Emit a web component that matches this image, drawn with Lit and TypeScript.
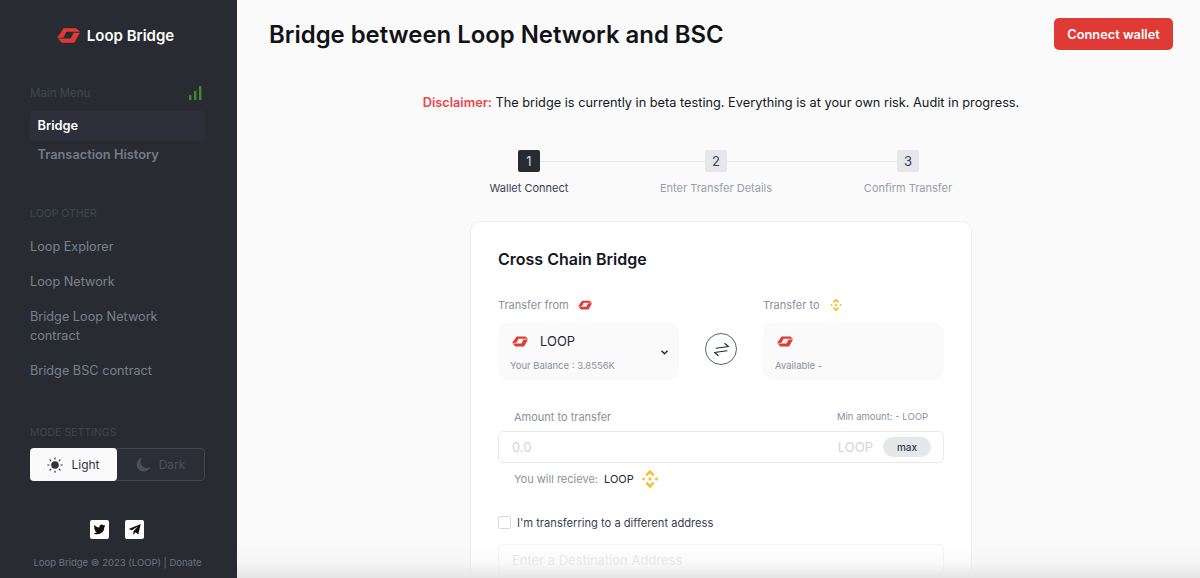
import { LitElement, html, css, svg } from 'lit';
import { customElement } from 'lit/decorators.js';

const loopIcon = (w: number, h: number) => html`<svg width=${w} height=${h} viewBox="0 0 24 15">
  <path fill="#e03a32" d="M0 10 7 0H20L24 3.500H9.800L6.800 9.500Z"/>
  <path fill="#e03a32" d="M24 4.500 18 15H5L1 10.500H14.300L17.300 4.500Z"/>
</svg>`;

const bnbIcon = (s: number) => html`<svg width=${s} height=${s} viewBox="0 0 24 24" fill="#f0b90b" opacity=".85">
  ${svg`<path d="M12 1 17.500 6.500 15.300 8.700 12 5.400 8.700 8.700 6.500 6.500Z"/>
  <path d="M12 23 6.500 17.500 8.700 15.300 12 18.600 15.300 15.300 17.500 17.500Z"/>
  <path d="M4.300 9.800 6.500 12 4.300 14.200 2.100 12Z"/>
  <path d="M19.700 9.800 21.900 12 19.700 14.200 17.500 12Z"/>
  <path d="M12 9.600 14.400 12 12 14.400 9.600 12Z"/>`}
</svg>`;

@customElement('app-root')
export class AppRoot extends LitElement {
  static styles = css`
    :host {
      display: block;
      height: 578px;
      overflow: hidden;
      position: relative;
      font-family: Inter, "Liberation Sans", sans-serif;
      color: #111827;
    }
    .page { display: flex; height: 578px; background: #fafafa; }

    .side {
      width: 237px;
      flex: none;
      box-sizing: border-box;
      background: #282c32;
      padding: 0 32px 0 30px;
      display: flex;
      flex-direction: column;
    }
    .brand {
      height: 70px;
      display: flex;
      align-items: center;
      justify-content: center;
      gap: 7px;
      padding-right: 4px;
      color: #fff;
      font-size: 15px;
      font-weight: 600;
    }
    .menu-head {
      margin-top: 15px;
      height: 16px;
      display: flex;
      justify-content: space-between;
      align-items: center;
      font-size: 11.5px;
      color: #41454e;
    }
    .menu-head svg { margin-right: 3px; }
    .nav-item {
      display: block;
      height: 30px;
      line-height: 30px;
      padding-left: 7.5px;
      border-radius: 4px;
      font-size: 12.8px;
      font-weight: 600;
      color: #747987;
    }
    .nav-item.active { margin-top: 10px; background: #2d303a; color: #fff; }
    .nav-item + .nav-item { margin-top: -1px; }
    .group-title {
      margin-top: 37px;
      font-size: 10.5px;
      line-height: 14px;
      color: #41454e;
      text-transform: uppercase;
    }
    .ext { margin-top: 16px; font-size: 12.7px; line-height: 19px; color: #7b808d; }
    .group-title.mode { margin-top: 46px; }
    .toggle {
      margin-top: 8px;
      display: flex;
      height: 33px;
      border: 1px solid #41454e;
      border-radius: 4px;
      box-sizing: border-box;
      background: #2b2e36;
    }
    .toggle div {
      flex: 1;
      display: flex;
      align-items: center;
      justify-content: center;
      gap: 8px;
      font-size: 12px;
      color: #4c505b;
    }
    .toggle .on {
      margin: -1px 0 -1px -1px;
      background: #fafafa;
      color: #30343b;
      border-radius: 4px;
    }
    .socials { margin: 39px 1px 0 0; display: flex; justify-content: center; gap: 16px; }
    .socials span {
      width: 19px;
      height: 19px;
      background: #fff;
      border-radius: 2px;
      display: flex;
      align-items: center;
      justify-content: center;
    }
    .copy {
      margin: 18px -30px 0 -30px;
      text-align: center;
      font-size: 9.5px;
      color: #6e7380;
    }

    .main { flex: 1; min-width: 0; display: flex; flex-direction: column; align-items: stretch; }
    .top {
      height: 68px;
      box-sizing: border-box;
      padding: 18px 27px 0 32px;
      display: flex;
      justify-content: space-between;
      align-items: flex-start;
    }
    h1 { margin: 1px 0 0; font-size: 23.9px; line-height: 32px; font-weight: 600; color: #111318; }
    .connect {
      width: 119px;
      height: 32px;
      border: 0;
      border-radius: 5px;
      background: #e03a36;
      color: #fff;
      font: 600 12.8px Inter, sans-serif;
    }
    .disclaimer { margin-top: 26px; padding: 9px 0 0 5px; text-align: center; font-size: 12.75px; line-height: 16px; }
    .disclaimer b { color: #e5484d; font-weight: 600; }

    .steps {
      margin: 39px 0 0 252px;
      height: 50px;
      display: grid;
      grid-template-columns: 80px 136px 22px 141px 80px;
      justify-content: start;
    }
    .line { height: 1px; margin-top: 11px; background: #e5e7eb; }
    .line.first { margin-left: -29px; }
    .line.second { margin-right: -29px; }
    .step { position: relative; display: flex; justify-content: center; }
    .num {
      width: 22px;
      height: 22px;
      border-radius: 2px;
      background: #e5e7eb;
      color: #374151;
      font-size: 13px;
      line-height: 22px;
      text-align: center;
    }
    .num.cur { background: #282c32; color: #d1d5db; }
    .step label {
      position: absolute;
      top: 31px;
      white-space: nowrap;
      font-size: 11px;
      line-height: 15px;
      color: #9a9eaa;
    }
    .step label.cur { color: #374151; }

    .card {
      margin: 29px 0 0 233px;
      width: 502px;
      height: 420px;
      box-sizing: border-box;
      background: #fff;
      border: 1px solid #eceef1;
      border-radius: 10px;
      padding: 27px 27px 0 27px;
    }
    h2 { margin: 0; font-size: 16px; line-height: 20px; font-weight: 600; color: #15181e; }
    .transfer {
      margin-top: 27px;
      display: grid;
      grid-template-columns: 181px 84px 181px;
    }
    .cap {
      height: 18px;
      display: flex;
      align-items: center;
      gap: 9px;
      font-size: 11px;
      color: #8b8f9c;
    }
    .box {
      margin-top: 9px;
      height: 57px;
      box-sizing: border-box;
      background: #fafafa;
      border-radius: 10px;
      padding: 11px 12px 0 14px;
      position: relative;
    }
    .box .tok { height: 15px; display: flex; align-items: center; gap: 12px; font-size: 13px; color: #1f2937; }
    .box small { display: block; margin-top: 11px; margin-left: -2px; font-size: 9.5px; line-height: 12px; color: #8b8f9c; }
    .chev { position: absolute; right: 10px; top: 26px; }
    .swap {
      grid-column: 2;
      align-self: center;
      justify-self: center;
      width: 32px;
      height: 32px;
      margin-top: 23px;
      box-sizing: border-box;
      border: 1px solid #5b6270;
      border-radius: 50%;
      display: flex;
      align-items: center;
      justify-content: center;
    }
    .amount-head {
      margin-top: 29px;
      padding: 0 16px;
      height: 16px;
      display: flex;
      justify-content: space-between;
      align-items: center;
      font-size: 11px;
      color: #8b8f9c;
    }
    .amount-head span + span { font-size: 9.5px; }
    .field {
      margin-top: 6px;
      height: 32px;
      box-sizing: border-box;
      border: 1px solid #e7e9ec;
      border-radius: 5px;
      padding: 0 12px 0 13px;
      display: flex;
      align-items: center;
      font-size: 13px;
      color: #d3d5da;
    }
    .field .unit { margin-left: auto; margin-right: 10px; }
    .max {
      width: 48px;
      height: 20px;
      border-radius: 10px;
      background: #e5e7eb;
      color: #374151;
      font-size: 10px;
      font-weight: 500;
      line-height: 20px;
      text-align: center;
    }
    .receive {
      margin-top: 7px;
      padding-left: 16px;
      height: 18px;
      display: flex;
      align-items: center;
      gap: 6px;
      font-size: 11px;
      color: #8b8f9c;
    }
    .receive b { font-weight: 400; color: #1f2937; }
    .check {
      margin-top: 28px;
      height: 14px;
      display: flex;
      align-items: center;
      gap: 6px;
      font-size: 11.15px;
      color: #374151;
    }
    .check i { width: 13px; height: 13px; box-sizing: border-box; border: 1px solid #d8dade; border-radius: 2px; }
    .dest {
      margin-top: 14px;
      height: 32px;
      box-sizing: border-box;
      border: 1px solid #f3f4f5;
      border-radius: 5px;
      padding-left: 13px;
      line-height: 30px;
      font-size: 13px;
      color: #e6e7ea;
    }
    .fade {
      position: absolute;
      left: 237px;
      right: 0;
      bottom: 0;
      height: 34px;
      background: linear-gradient(to bottom, rgba(232, 232, 233, 0), rgba(232, 232, 233, .25) 55%, rgba(230, 230, 231, 1));
      pointer-events: none;
    }
  `;

  render() {
    return html`
      <div class="page">
        <aside class="side">
          <div class="brand">${loopIcon(23, 15)}<span>Loop Bridge</span></div>
          <div class="menu-head">
            <span>Main Menu</span>
            <svg width="13" height="14" viewBox="0 0 13 14" fill="#3f8a2c">
              <rect x="0" y="9" width="2.4" height="5"/><rect x="5" y="5" width="2.4" height="9"/><rect x="10" y="0" width="2.4" height="14"/>
            </svg>
          </div>
          <a class="nav-item active">Bridge</a>
          <a class="nav-item">Transaction History</a>
          <div class="group-title">Loop Other</div>
          <div class="ext">Loop Explorer</div>
          <div class="ext">Loop Network</div>
          <div class="ext">Bridge Loop Network contract</div>
          <div class="ext">Bridge BSC contract</div>
          <div class="group-title mode">Mode Settings</div>
          <div class="toggle">
            <div class="on">
              <svg width="16" height="16" viewBox="0 0 16 16" stroke="#30343b" stroke-width="1.2" stroke-linecap="round">
                <circle cx="8" cy="8" r="3.8" fill="#30343b" stroke="none"/>
                <path d="M8 .8V2M8 14v1.2M.8 8H2M14 8h1.2M2.9 2.9l.9.9M12.2 12.2l.9.9M2.9 13.1l.9-.9M12.2 3.8l.9-.9"/>
              </svg>
              Light
            </div>
            <div>
              <svg width="15" height="15" viewBox="0 0 15 15" fill="#4c505b"><path d="M6.5.6A7 7 0 1 0 14.4 9.4 5.8 5.8 0 0 1 6.5.6Z"/></svg>
              Dark
            </div>
          </div>
          <div class="socials">
            <span>
              <svg width="13" height="13" viewBox="0 0 24 24" fill="#111"><path d="M23 4.9c-.8.4-1.7.6-2.6.7.9-.6 1.6-1.4 2-2.500-.9.500-1.800.900-2.900 1.100A4.500 4.500 0 0 0 11.800 8.300C8 8.100 4.700 6.300 2.500 3.600c-1.200 2.100-.6 4.800 1.400 6.100-.7 0-1.400-.2-2-.6 0 2.200 1.500 4.100 3.600 4.500-.7.200-1.400.2-2 .1.600 1.800 2.200 3.100 4.200 3.100A9.100 9.100 0 0 1 1 18.700 12.900 12.900 0 0 0 20.800 7.200c.9-.6 1.600-1.400 2.200-2.300Z"/></svg>
            </span>
            <span>
              <svg width="13" height="13" viewBox="0 0 24 24" fill="#111"><path d="M23.500 2 1 11l6.500 2.400L18.500 6 10 15v7l3.800-4.700 5.200 3.700Z"/></svg>
            </span>
          </div>
          <div class="copy">Loop Bridge © 2023 (LOOP) | Donate</div>
        </aside>

        <main class="main">
          <div class="top">
            <h1>Bridge between Loop Network and BSC</h1>
            <button class="connect">Connect wallet</button>
          </div>
          <div class="disclaimer"><b>Disclaimer:</b> The bridge is currently in beta testing. Everything is at your own risk. Audit in progress.</div>

          <div class="steps">
            <div class="step"><div class="num cur">1</div><label class="cur">Wallet Connect</label></div>
            <div class="line first"></div>
            <div class="step"><div class="num">2</div><label>Enter Transfer Details</label></div>
            <div class="line second"></div>
            <div class="step"><div class="num">3</div><label>Confirm Transfer</label></div>
          </div>

          <section class="card">
            <h2>Cross Chain Bridge</h2>
            <div class="transfer">
              <div>
                <div class="cap">Transfer from ${loopIcon(14, 10)}</div>
                <div class="box">
                  <div class="tok">${loopIcon(16, 11)}<span>LOOP</span></div>
                  <small>Your Balance : 3.8556K</small>
                  <svg class="chev" width="9" height="7" viewBox="0 0 9 7" fill="none" stroke="#1f2937" stroke-width="1.5"><path d="M1.500 1.800 4.500 4.800 7.500 1.800"/></svg>
                </div>
              </div>
              <div class="swap">
                <svg width="17" height="15" viewBox="0 0 17 15" fill="none" stroke="#1f2937" stroke-width="1.100" stroke-linecap="round" stroke-linejoin="round">
                  <path d="M3 6.200 15.500 4.500 11.800 1.500M14 8.800 1.500 10.500 5.200 13.500"/>
                </svg>
              </div>
              <div>
                <div class="cap">Transfer to ${bnbIcon(14)}</div>
                <div class="box">
                  <div class="tok">${loopIcon(16, 11)}</div>
                  <small>Available -</small>
                </div>
              </div>
            </div>

            <div class="amount-head"><span>Amount to transfer</span><span>Min amount: - LOOP</span></div>
            <div class="field"><span>0.0</span><span class="unit">LOOP</span><span class="max">max</span></div>
            <div class="receive"><span>You will recieve:</span><b>LOOP</b>${bnbIcon(20)}</div>
            <div class="check"><i></i><span>I'm transferring to a different address</span></div>
            <div class="dest">Enter a Destination Address</div>
          </section>
        </main>
      </div>
      <div class="fade"></div>
    `;
  }
}
